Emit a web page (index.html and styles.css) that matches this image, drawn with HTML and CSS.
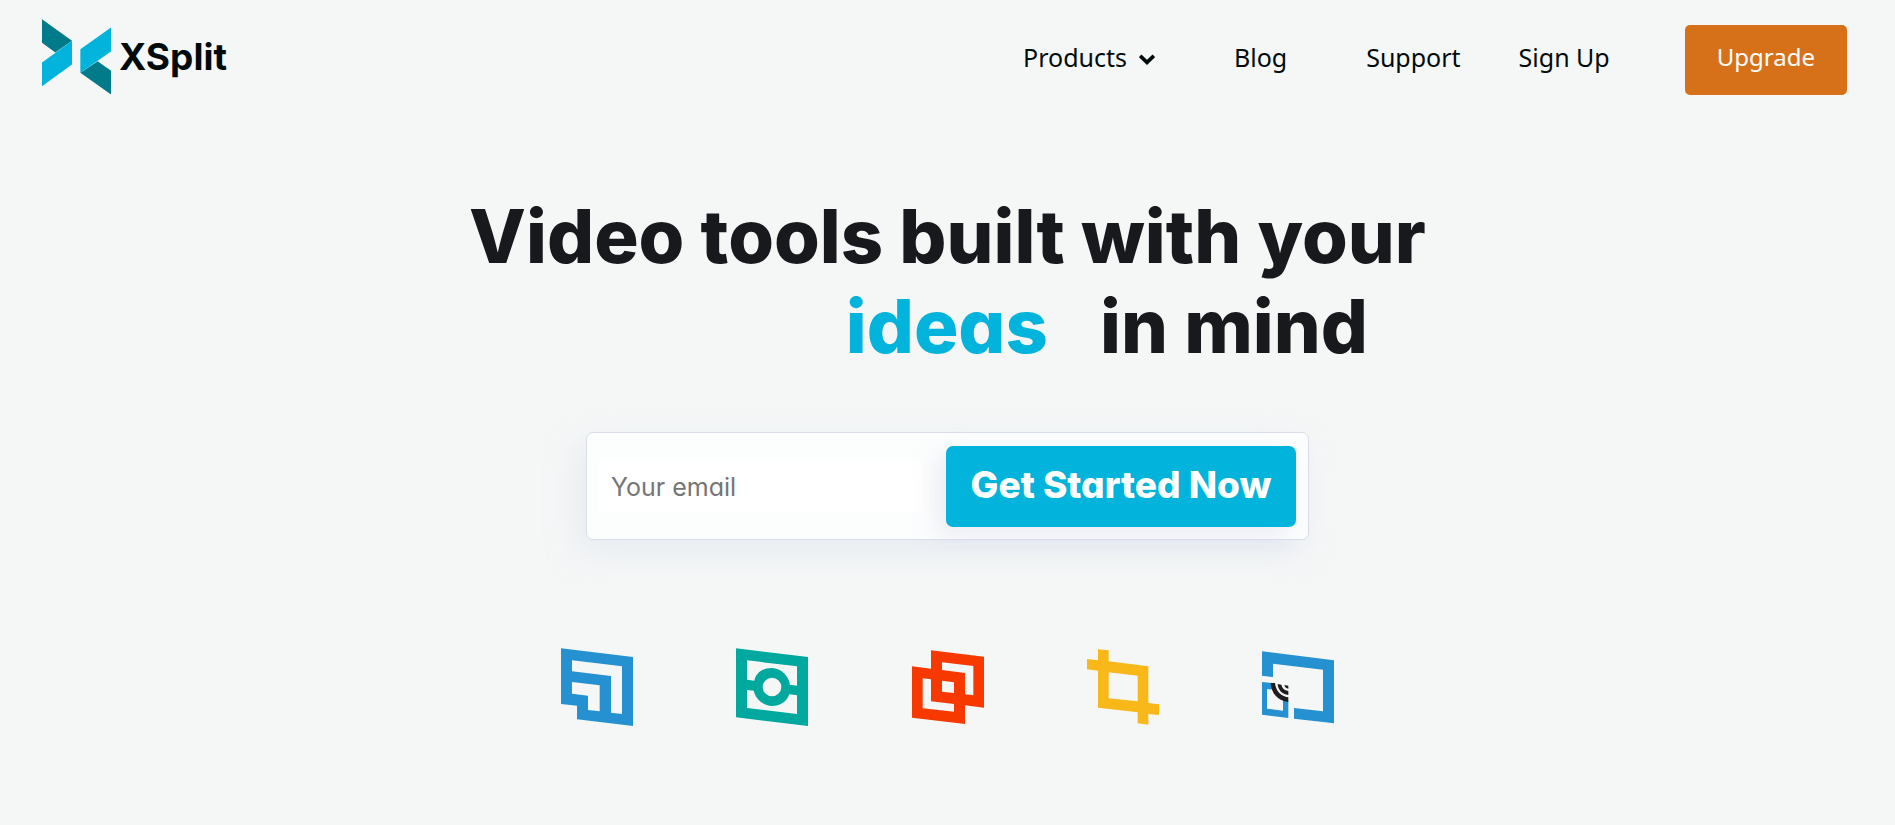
FILE: index.html
```html
<!DOCTYPE html>
<html lang="en">
<head>
<meta charset="utf-8">
<meta name="viewport" content="width=device-width, initial-scale=1">
<title>XSplit</title>
<link rel="stylesheet" href="styles.css">
</head>
<body>
<header class="header">
  <a class="logo" href="#">
    <svg class="logo-mark" viewBox="36 26 207 227" aria-hidden="true">
      <path fill="#017b89" d="M36 26 126 91 76 126 36 97zM203 152 243 181V252L151 187z"/>
      <path fill="#02b4dc" d="M126 91V162L36 227V156zM243 51V123L151 187V116z"/>
    </svg>
    <span class="logo-text">XSplit</span>
  </a>
  <nav class="nav" aria-label="Main">
    <a class="nav-link nav-products" href="#">Products
      <svg class="chevron" viewBox="0 0 16 11" aria-hidden="true"><path d="M1.200 1.800 8 8.400 14.800 1.800" fill="none" stroke="currentColor" stroke-width="3.600"/></svg>
    </a>
    <a class="nav-link nav-blog" href="#">Blog</a>
    <a class="nav-link nav-support" href="#">Support</a>
    <a class="nav-link nav-signup" href="#">Sign Up</a>
    <a class="upgrade" href="#">Upgrade</a>
  </nav>
</header>
<main class="hero">
  <h1 class="title">
    <span class="title-line">Video tools built with your</span>
    <span class="title-line title-second"><span class="rotating-word">ideas</span><span class="title-end">in mind</span></span>
  </h1>
  <form class="signup">
    <input class="email" type="email" placeholder="Your email" aria-label="Your email">
    <button class="submit" type="submit">Get Started Now</button>
  </form>
  <div class="products">
    <a class="product" href="#" aria-label="Broadcaster">
      <svg viewBox="63 50 216 240"><path fill="#2591d1" fill-rule="evenodd" d="M63 54 279 80V287L111 267V226L63 221zM96 90V123L213 137V247L246 251V108zM96 155V190L144 196V239L179 243V165z"/></svg>
    </a>
    <a class="product" href="#" aria-label="VCam">
      <svg viewBox="588 50 216 240"><path fill="#01a89d" fill-rule="evenodd" d="M588 54 804 80V287L588 261zM621 90V148L643 151C649 125 670 113 696 113C724 115 745 135 750 163L771 166V108zM621 179V233L771 251V195L748 192C739 216 720 227 696 227C668 225 647 206 641 181zM696 142A28 28 0 1 0 696 198A28 28 0 1 0 696 142z"/></svg>
    </a>
    <a class="product" href="#" aria-label="Capture">
      <svg viewBox="66 50 216 240"><path fill="#f73900" fill-rule="evenodd" d="M123 60 282 79V232L225 225V281L66 262V108L123 115zM156 96V119L225 128V192L250 195V107zM98 144V234L192 244V221L123 213V147zM156 151V184L192 188V156z"/></svg>
    </a>
    <a class="product" href="#" aria-label="Presenter">
      <svg viewBox="591 50 216 240"><path fill="#f9b81a" fill-rule="evenodd" d="M624 57 656 60V93L775 108V218L807 222V254L775 251V283L743 279V246L624 232V121L591 117V86L624 90zM656 126V204L743 213V136z"/></svg>
    </a>
    <a class="product" href="#" aria-label="Connect">
      <svg viewBox="66 50 216 240"><path fill="#2591d1" fill-rule="evenodd" d="M66 63 282 90V279L162 265V233L249 243V118L99 100V140L66 136zM66 155 97 158 102 178 81 176V235L129 241V206L145 213V263L66 253z"/><path fill="#211d1f" d="M92 158H105C107 181 123 198 145 201V215C114 212 94 190 92 158zM113 161 124 163C126 173 133 180 145 182V194C126 191 114 179 113 161zM133 164 145 166V175C138 174 134 170 133 164z"/></svg>
    </a>
  </div>
</main>
</body>
</html>
```

FILE: styles.css
```css
* { box-sizing: border-box; }

body {
  margin: 0;
  min-height: 100vh;
  background: #f5f7f7;
  color: #18191d;
  font-family: Inter, "Open Sans", sans-serif;
  font-feature-settings: "cv11";
}

a { color: inherit; text-decoration: none; }

svg { display: block; }

.header {
  display: flex;
  justify-content: space-between;
  align-items: flex-start;
  padding: 19px 48px 24px 42px;
}

.logo {
  display: flex;
  align-items: center;
  gap: 8px;
  color: #020b0c;
}

.logo-mark { width: 69px; height: 76px; }

.logo-text {
  font-size: 37px;
  font-weight: 700;
  line-height: 48px;
}

.nav {
  display: flex;
  align-items: flex-start;
  margin-top: 6px;
  color: #020b0c;
  font-family: "Noto Sans", sans-serif;
  font-size: 25px;
  line-height: 40px;
}

.nav-link {
  padding-top: 12px;
  white-space: nowrap;
}

.nav-products {
  display: flex;
  align-items: center;
  gap: 12px;
  margin-right: 79px;
}

.chevron { width: 16px; height: 11px; margin-top: 4px; }

.nav-blog { margin-right: 79px; }

.nav-support { margin-right: 58px; }

.nav-signup { margin-right: 75px; }

.upgrade {
  padding: 12px 32px 18px;
  border-radius: 5px;
  background: #d77119;
  color: #fff;
  font-size: 24px;
}

.hero {
  display: flex;
  flex-direction: column;
  align-items: center;
  padding: 72px 24px;
}

.title {
  margin: 0;
  font-size: 74px;
  font-weight: 800;
  line-height: 90px;
}

.title-line { display: block; white-space: nowrap; }

.title-second {
  display: flex;
  justify-content: flex-end;
  gap: 52px;
  padding-right: 58px;
}

.rotating-word { color: #02b4dc; }

.signup {
  display: flex;
  align-items: center;
  gap: 24px;
  width: 100%;
  max-width: 723px;
  margin-top: 61px;
  padding: 13px 12px 12px;
  border: 1px solid #d9deea;
  border-radius: 7px;
  background: #fcfdfd;
  box-shadow: -8px 12px 32px rgba(206, 211, 232, 0.35);
}

.email {
  flex: 1;
  min-width: 0;
  height: 51px;
  padding: 0 12px;
  border: 0;
  background: #fff;
  font: 400 25px/36px Inter, sans-serif;
  font-feature-settings: "cv11";
}

.email::placeholder { color: #757575; opacity: 1; }

.submit {
  width: 350px;
  height: 81px;
  padding: 0 0 3px;
  border: 0;
  border-radius: 7px;
  background: #02b4dc;
  box-shadow: -8px 8px 24px rgba(206, 211, 232, 0.4);
  color: #fff;
  font: 800 37px/54px Inter, sans-serif;
  font-feature-settings: "cv11";
}

.products {
  display: flex;
  justify-content: space-between;
  width: 100%;
  max-width: 773px;
  margin-top: 107px;
}

.product svg { width: 72px; height: 80px; }
```
